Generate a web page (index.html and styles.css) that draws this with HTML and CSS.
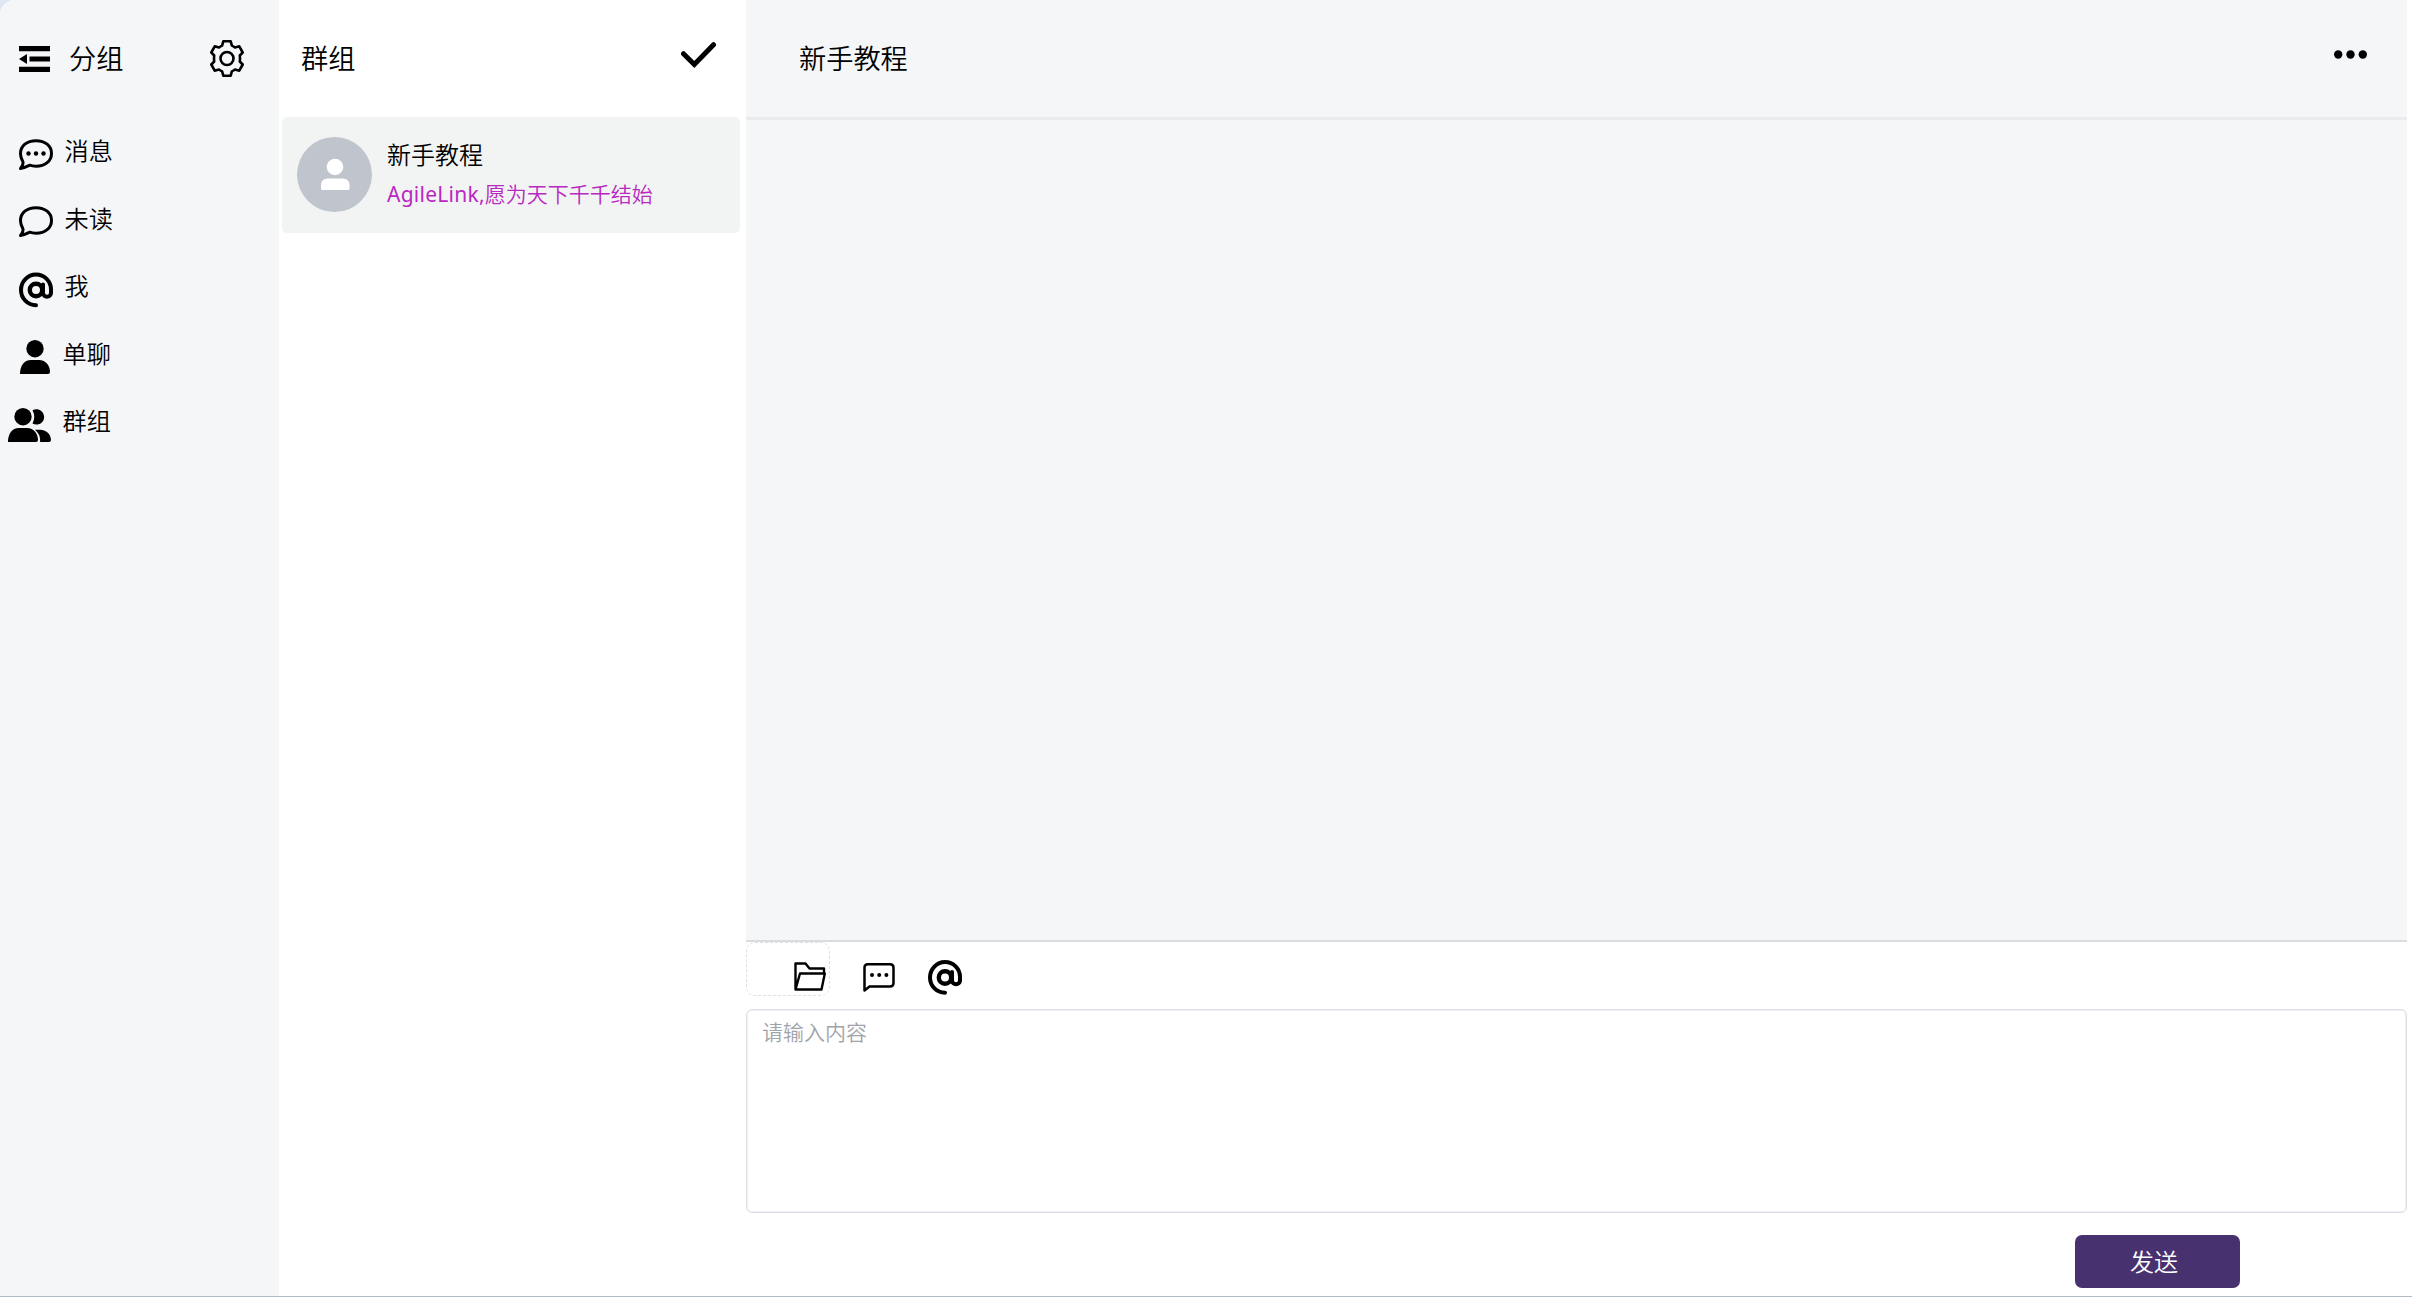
FILE: index.html
```html
<!DOCTYPE html>
<html lang="zh-CN">
<head>
<meta charset="utf-8">
<title>AgileLink</title>
<link rel="stylesheet" href="styles.css">
</head>
<body>
<svg class="defs" width="0" height="0">
  <symbol id="at" viewBox="0 0 34 35"><g fill="none" stroke="currentColor" stroke-linecap="round" stroke-linejoin="round"><path stroke-width="4" d="M17 32.8C8.400 32.600 2 25.800 2 17.500C2 9 8.700 2.100 17 2.100C25.300 2.100 32 8.600 32 17V20.500C32 25.500 24 25.500 24 20.500V12"/><circle cx="17" cy="17.500" r="6.200" stroke-width="4.400"/></g></symbol>
</svg>
<div class="app">
  <aside class="sidebar">
    <header class="side-head">
      <svg class="fold" viewBox="0 0 31 26"><path d="M0 0H31V5.200H0zM10.500 10.500H31V15.500H10.500zM0 20.800H31V26H0zM0 13L8 8V18z"/></svg>
      <h1 class="title">分组</h1>
      <svg class="gear" viewBox="0 0 34 37"><g fill="none" stroke="currentColor" stroke-width="2.600" stroke-linejoin="round"><path d="M13.300 1.300H20.700L21.900 5.600Q23.600 6.300 25 7.400L29.300 6.300L32.700 12.500L29.800 15.500Q30.200 18.500 29.800 21.500L32.700 24.500L29.300 30.700L25 29.600Q23.600 30.700 21.900 31.400L20.700 35.700H13.300L12.100 31.400Q10.400 30.700 9 29.600L4.700 30.700L1.300 24.500L4.200 21.500Q3.800 18.500 4.200 15.500L1.300 12.500L4.700 6.300L9 7.400Q10.400 6.300 12.100 5.600z"/><circle cx="17" cy="18.500" r="6.500"/></g></svg>
    </header>
    <nav class="nav">
      <a class="item"><svg class="icon" viewBox="0 0 34 36"><path fill="none" stroke="currentColor" stroke-width="3" stroke-linejoin="round" d="M1.500 31.500C4 28.500 4.500 26.500 3.800 24.500C2.200 21.500 1.500 19.200 1.500 16.700C1.500 8.700 8 3.700 17 3.700S32.500 8.800 32.500 16.400S26 29.200 17 29.200C14.500 29.200 12.500 28.900 10.700 28.200C8 29.500 5 31 1.500 31.500z"/><circle cx="9.500" cy="16.500" r="2.200"/><circle cx="17" cy="16.500" r="2.200"/><circle cx="24.500" cy="16.500" r="2.200"/></svg><span>消息</span></a>
      <a class="item"><svg class="icon" viewBox="0 0 34 36"><path fill="none" stroke="currentColor" stroke-width="3" stroke-linejoin="round" d="M1.500 31.500C4 28.500 4.500 26.500 3.800 24.500C2.200 21.500 1.500 19.200 1.500 16.700C1.500 8.700 8 3.700 17 3.700S32.500 8.800 32.500 16.400S26 29.200 17 29.200C14.500 29.200 12.500 28.900 10.700 28.200C8 29.500 5 31 1.500 31.500z"/></svg><span>未读</span></a>
      <a class="item"><svg class="icon"><use href="#at"/></svg><span>我</span></a>
      <a class="item single"><svg class="icon" viewBox="0 0 34 36"><circle cx="16" cy="9.700" r="8.700"/><path d="M1 35C1 27 5 21 12 21H20C27 21 31 27 31 33Q31 35 29 35z"/></svg><span>单聊</span></a>
      <a class="item group"><svg class="icon wide" viewBox="0 0 43 36"><circle cx="15" cy="9.700" r="8.700"/><path d="M0 35C0 27 4 21 11 21H19C26 21 30 27 30 33Q30 35 28 35zM24.500 3.300A7.700 7.700 0 1 1 24.500 16.500Q28 10 24.500 3.300zM27 22.700H32C39 22.700 43 28 43 33Q43 35 41 35H32Q33 28 27 22.700z"/></svg><span>群组</span></a>
    </nav>
  </aside>
  <section class="list">
    <header class="list-head">
      <h2 class="title">群组</h2>
      <svg class="check" viewBox="0 0 35 27"><path fill="none" stroke="currentColor" stroke-width="5" stroke-linecap="round" d="M2.500 11.700L13.300 22.500L32.500 2.700"/></svg>
    </header>
    <article class="card">
      <svg class="avatar" viewBox="0 0 75 75"><circle cx="37.500" cy="37.500" r="37.500" fill="#c0c4cc"/><circle cx="38" cy="30" r="8.300" fill="#fff"/><path fill="#fff" d="M24 51.500V48Q24 41.500 31 41.500H45.500Q52.500 41.500 52.500 48V51.500Q52.500 53 51 53H25.500Q24 53 24 51.500z"/></svg>
      <div class="info"><div class="name">新手教程</div><div class="motto"><span class="brand">AgileLink,</span>愿为天下千千结始</div></div>
    </article>
  </section>
  <main class="chat">
    <header class="chat-head">
      <h2 class="title">新手教程</h2>
      <svg class="more" viewBox="0 0 33 9"><circle cx="4.200" cy="4.500" r="4.200"/><circle cx="16.500" cy="4.500" r="4.200"/><circle cx="28.800" cy="4.500" r="4.200"/></svg>
    </header>
    <div class="messages"></div>
    <div class="tools">
      <div class="upload"><svg class="folder" viewBox="0 0 32 29"><path fill="none" stroke="currentColor" stroke-width="2.400" stroke-linejoin="round" d="M1.500 27V1.500H11.500L15.500 6.500H30V10.500M1.500 27.500L6 11.500H30.800L27.500 27.500z"/></svg></div>
      <svg class="bubble" viewBox="0 0 32 29"><path fill="none" stroke="currentColor" stroke-width="2.500" stroke-linejoin="round" d="M1.500 27.500V4.700Q1.500 1.300 4.900 1.300H27Q30.500 1.300 30.500 4.700V20Q30.500 23.500 27 23.500H6.500z"/><circle cx="9" cy="12" r="2"/><circle cx="16.200" cy="12" r="2"/><circle cx="23.400" cy="12" r="2"/></svg>
      <svg class="mention"><use href="#at"/></svg>
    </div>
    <textarea class="editor" placeholder="请输入内容"></textarea>
    <footer class="foot"><button class="send">发送</button></footer>
  </main>
</div>
</body>
</html>
```
FILE: styles.css
```css
* { box-sizing: border-box; }
body {
  margin: 0;
  background: #dfe7f5;
  color: #000;
  font-family: "Noto Sans", "Noto Sans CJK SC", sans-serif;
  font-weight: 350;
}
svg { display: block; flex: none; fill: currentColor; }
.defs { position: absolute; }
.app {
  display: flex;
  height: 1297px;
  overflow: hidden;
  background: #fff;
  border-bottom: 1px solid #b1b9c2;
  border-top-left-radius: 15px;
}
.title { margin: 0; font-size: 27.2px; font-weight: 350; line-height: 36px; }
.sidebar { width: 279px; background: #f4f6f8; }
.side-head { display: flex; align-items: center; height: 117px; padding: 0 35px 0 19px; }
.fold { width: 31px; height: 26px; }
.side-head .title { margin-left: 19px; }
.gear { width: 34px; height: 37px; margin-left: auto; }
.nav { display: grid; grid-auto-rows: 67.5px; padding-top: 4px; }
.item { display: flex; align-items: center; gap: 11.5px; padding-left: 19px; font-size: 24.2px; line-height: 32px; }
.item span { margin-top: -7px; }
.icon { width: 34px; height: 36px; }
.single { gap: 9.5px; }
.group { padding-left: 8px; }
.wide { width: 43px; }
.list { width: 467px; }
.list-head { display: flex; align-items: center; justify-content: space-between; height: 117px; padding: 0 30px 0 22px; }
.check { width: 35px; height: 27px; margin-top: -7px; }
.card { display: flex; align-items: center; gap: 15px; height: 116px; margin: 0 6px 0 3px; padding: 0 0 1px 15px; border-radius: 5px; background: #f2f4f4; }
.avatar { width: 75px; height: 75px; }
.name { font-size: 24px; line-height: 40px; }
.motto { font-size: 21px; line-height: 39px; color: #b928c0; }
.brand { font-weight: 400; letter-spacing: 0.25px; }
.chat { display: flex; flex-direction: column; width: 1661px; }
.chat-head { display: flex; align-items: center; justify-content: space-between; height: 120px; padding: 0 40px 0 53px; background: #f4f6f8; border-bottom: 3px solid #e9ebee; }
.more { width: 33px; height: 9px; margin-top: -9px; }
.messages { flex: none; height: 822px; background: #f4f6f8; border-bottom: 2px solid #dadcdf; }
.tools { display: flex; height: 67px; }
.upload { width: 84px; height: 54px; padding: 19px 0 0 47px; border: 1px dashed #dcdfe6; border-radius: 9px; }
.folder { width: 32px; height: 29px; }
.bubble { width: 32px; height: 29px; margin: 21px 0 0 33px; }
.mention { width: 34px; height: 35px; margin: 18px 0 0 33px; }
.editor { display: block; height: 204px; padding: 6px 15px; border: 1px solid #dcdfe6; border-radius: 6px; box-shadow: inset 0 0 0 1px #eef0f4; outline: 0; resize: none; font: inherit; font-size: 21px; line-height: 32px; }
.editor::placeholder { color: #a0a3aa; }
.foot { display: flex; justify-content: flex-end; padding: 22px 167px 0 0; }
.send { width: 165px; height: 53px; padding: 0 7px 0 0; border: 0; border-radius: 7px; background: #48316f; color: #fff; font: inherit; font-size: 24px; line-height: 36px; }
```
